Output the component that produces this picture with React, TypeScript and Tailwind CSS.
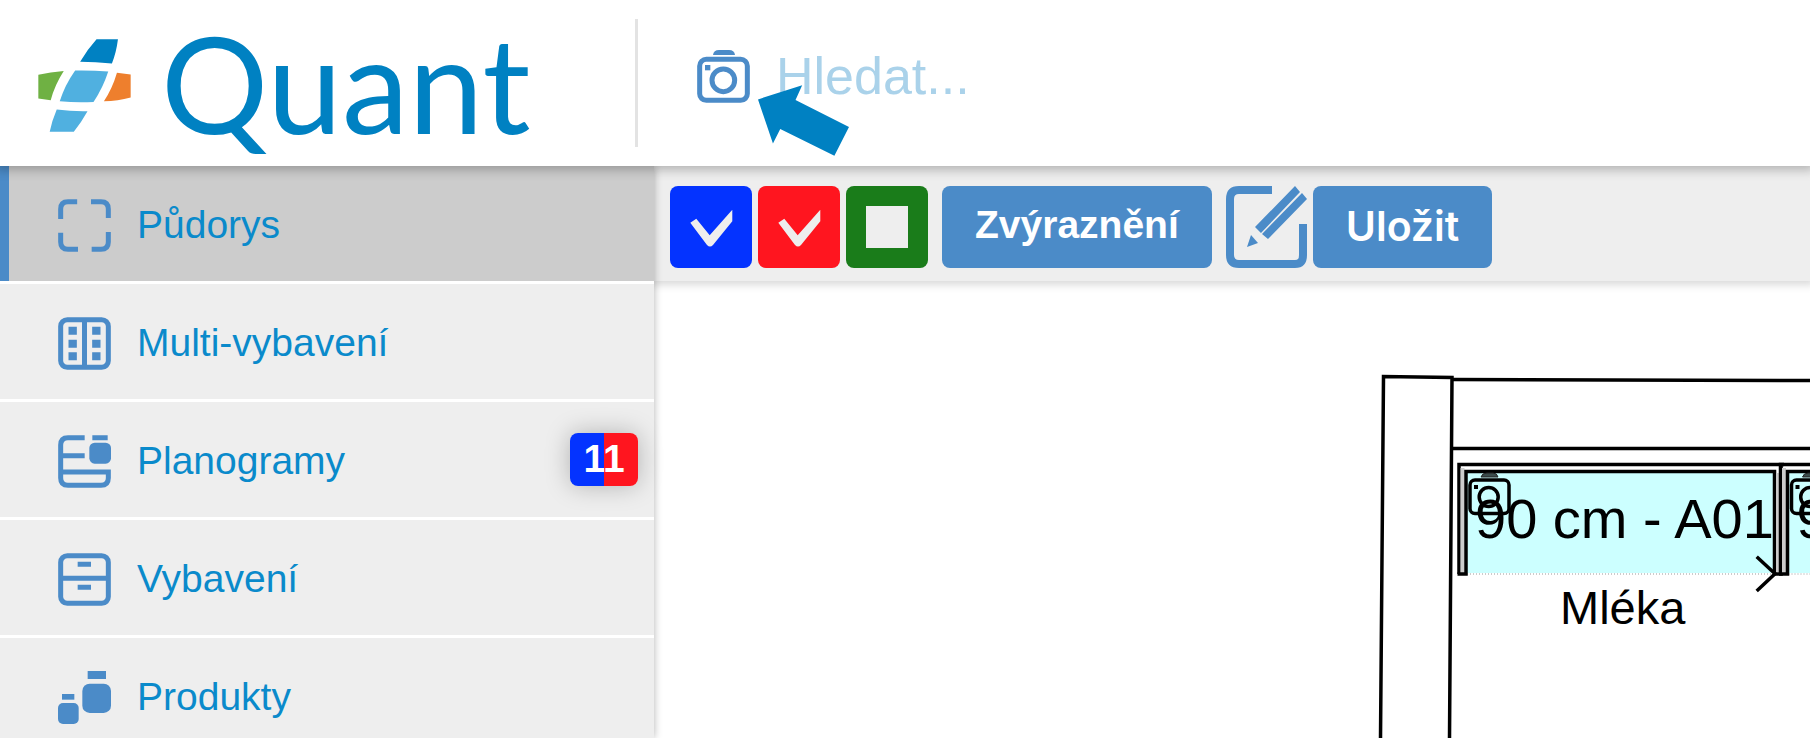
import type { ReactNode } from "react";

const menu: { label: string; icon: ReactNode; active?: boolean; badge?: string }[] = [
  { label: "Půdorys", icon: <FloorPlanIcon />, active: true },
  { label: "Multi-vybavení", icon: <MultiFixtureIcon /> },
  { label: "Planogramy", icon: <PlanogramIcon />, badge: "11" },
  { label: "Vybavení", icon: <FixtureIcon /> },
  { label: "Produkty", icon: <ProductsIcon /> },
];

function FloorPlanIcon() {
  return (
    <svg viewBox="0 0 159 159" className="size-[53px]" fill="none" stroke="#4b8bc8" strokeWidth="15">
      <path d="M57.500 8H30Q8 8 8 30V60M99 8h30q22 0 22 22v27M8 101v28q0 22 22 22h30M151 99v30q0 22-22 22h-28" />
    </svg>
  );
}

function MultiFixtureIcon() {
  return (
    <svg viewBox="0 0 159 159" className="size-[53px]" fill="none" stroke="#4b8bc8" strokeWidth="15">
      <rect x="8" y="8" width="143" height="143" rx="20" />
      <path d="M79.500 8v143" />
      <path d="M44 29v24M44 68v24M44 106v24M115 29v24M115 68v24M115 106v24" strokeWidth="25" />
    </svg>
  );
}

function PlanogramIcon() {
  return (
    <svg viewBox="0 0 159 159" className="size-[53px]" fill="none" stroke="#4b8bc8" strokeWidth="15">
      <path d="M80 8H30Q8 8 8 30v99q0 22 22 22h99q22 0 22-22v-18H8M8 62h72M103 8h46" />
      <rect x="94" y="23" width="65" height="63" rx="16" fill="#4b8bc8" stroke="none" />
    </svg>
  );
}

function FixtureIcon() {
  return (
    <svg viewBox="0 0 159 159" className="size-[53px]" fill="none" stroke="#4b8bc8" strokeWidth="15">
      <rect x="8" y="8" width="143" height="143" rx="20" />
      <path d="M8 76h143M59 34h40M59 103h40" />
    </svg>
  );
}

function ProductsIcon() {
  return (
    <svg viewBox="0 0 159 159" className="size-[53px]" fill="#4b8bc8">
      <rect x="89" y="0" width="55" height="24" />
      <rect x="73" y="38" width="86" height="88" rx="22" />
      <rect x="12" y="69" width="37" height="17" />
      <rect x="0" y="96" width="62" height="63" rx="15" />
    </svg>
  );
}

function CameraIcon() {
  return (
    <svg viewBox="0 0 159 159" className="size-[53px]" fill="none" stroke="#4b8bc8" strokeWidth="15">
      <path d="M48 15q2-15 18-15h30q16 0 18 15z" fill="#4b8bc8" stroke="none" />
      <rect x="8" y="28" width="143" height="123" rx="20" />
      <circle cx="79" cy="91" r="34" />
      <rect x="24" y="45" width="16" height="16" fill="#4b8bc8" stroke="none" />
    </svg>
  );
}

function LogoMark() {
  return (
    <svg viewBox="115 118 278 278" className="mt-1 size-[93px]">
      <path d="M290 119h64q-5 40-18 72-50-5-95-5 22-37 49-67z" fill="#0081c2" />
      <path d="M226 212q50-1 99 3-16 49-44 91-50 3-101-2 15-48 46-92z" fill="#50b0e0" />
      <path d="M171 329q46 6 92 5-18 33-41 61h-72q7-33 21-66z" fill="#50b0e0" />
      <path d="M116 225q36-8 76-11-27 42-39 87l-37-5z" fill="#6fb143" />
      <path d="M351 219l41 5v69q-38 11-80 11 25-37 39-85z" fill="#ee7f2d" />
    </svg>
  );
}

function CheckToggle({ label, checked, className }: { label: string; checked?: boolean; className: string }) {
  return (
    <label className={`relative block size-[82px] cursor-pointer rounded-lg ${className}`}>
      <input type="checkbox" defaultChecked={checked} aria-label={label} className="peer sr-only" />
      <svg viewBox="0 0 82 82" className="hidden peer-checked:block" fill="#eee">
        <path d="M20.300 36.700l6-4 13.400 16.600 22.600-25.600v11.600L43 59q-3 3-6 0z" />
      </svg>
      <svg viewBox="0 0 82 82" className="block peer-checked:hidden" fill="#eee">
        <rect x="20" y="20" width="42" height="42" />
      </svg>
    </label>
  );
}

function EditIcon() {
  return (
    <svg viewBox="0 0 81 82" className="h-[82px] w-[81px]">
      <path d="M46 4H13Q4 4 4 13v56q0 9 9 9h56q8 0 8-9V38" fill="none" stroke="#4b8bc8" strokeWidth="8" />
      <path d="M69 0l5 6-39 41-6-6zM76 7l5 6-39 40-6-5zM25 49l7 8-11 4z" fill="#4b8bc8" />
    </svg>
  );
}

function Shelf() {
  return (
    <g>
      <path d="M1459 574V464.500h325" fill="none" stroke="#000" strokeWidth="3.500" />
      <path d="M1462.500 573V468" stroke="#ccc" strokeWidth="4" />
      <rect x="1466" y="472" width="309" height="101" fill="#cff" />
      <path d="M1467 574h307" stroke="#999" strokeDasharray="1 2" />
      <path d="M1457.500 574h8.500V471.500h308.500V574h6.500V464.500" fill="none" stroke="#000" strokeWidth="3.500" />
      <path d="M1777.700 572V473" stroke="#ccc" strokeWidth="3" />
      <path d="M1481 477q1-4 6-4h6q4 0 5 4z" fill="#3c4c4c" stroke="#222" />
      <rect x="1470" y="480" width="39" height="33.500" rx="5" fill="none" stroke="#000" strokeWidth="3.500" />
      <circle cx="1488.700" cy="497" r="9.500" fill="none" stroke="#000" strokeWidth="3.500" />
      <rect x="1474" y="485" width="4" height="4" />
      <text x="1475" y="538" fontSize="56">
        90 cm - A01
      </text>
    </g>
  );
}

function FloorPlan() {
  return (
    <svg viewBox="1370 281 440 457" className="h-[457px] w-[440px] shrink-0">
      <g fill="none" stroke="#000" strokeWidth="3.500">
        <path d="M1380.500 738l3-361.500 68.500 1-2.500 360.500" />
        <path d="M1452 379.500l358 1M1452 448.500h358" />
      </g>
      <Shelf />
      <g transform="translate(321.500 0)">
        <Shelf />
      </g>
      <path d="M1756.700 556.700l18.300 17-18.300 17.300" fill="none" stroke="#000" strokeWidth="3.500" />
      <text x="1560" y="624" fontSize="47">
        Mléka
      </text>
    </svg>
  );
}

export default function App() {
  return (
    <div className="flex h-screen flex-col overflow-hidden bg-white font-['Liberation_Sans',Arial,sans-serif]">
      <header className="relative z-20 flex shrink-0 items-center bg-white py-[19px] shadow-[0_0_10px_4px_rgba(0,0,0,0.25)]">
        <a href="#" className="flex w-[635px] shrink-0 items-center gap-[30px] pl-[38px]">
          <LogoMark />
          <span className="font-[Lato] text-[134px] leading-[128px] text-[#0081c2]">Quant</span>
        </a>
        <div className="relative flex flex-1 items-center gap-[26px] self-stretch border-l-3 border-[#e3e3e3] pb-[14px] pl-[59px]">
          <button type="button" aria-label="Fotografie">
            <CameraIcon />
          </button>
          <input
            type="search"
            aria-label="Hledat"
            placeholder="Hledat..."
            className="min-w-0 flex-1 bg-transparent text-[52px] text-[#0081c2] outline-none placeholder:text-[#aad2ea]"
          />
          <svg viewBox="295 195 274 213" className="absolute left-[120px] top-[66px] h-[71px] w-[91px]" fill="#0081c2">
            <path d="M295 238l133-43-20 45 161 81-44 87-163-81-22 44z" />
          </svg>
        </div>
      </header>

      <div className="flex min-h-0 flex-1">
        <nav className="z-10 flex w-[654px] shrink-0 flex-col gap-[3px] bg-white shadow-[0_0_8px_rgba(0,0,0,0.3)]">
          {menu.map((item) => (
            <a
              key={item.label}
              href="#"
              className={`flex h-[115px] shrink-0 items-center gap-[26px] border-l-9 pl-[49px] pr-4 pt-[3px] text-[39px] text-[#0a8acb] ${
                item.active ? "border-[#4b8bc8] bg-[#ccc]" : "border-[#eee] bg-[#eee]"
              }`}
            >
              {item.icon}
              <span>{item.label}</span>
              {item.badge && (
                <span className="-mt-[3px] ml-auto flex h-[53px] w-[68px] items-center justify-center rounded-lg bg-linear-to-r from-[#0433ff] from-50% to-[#ff151f] to-50% font-bold text-white shadow-[0_0_24px_rgba(0,0,0,0.25)]">
                  {item.badge}
                </span>
              )}
            </a>
          ))}
        </nav>

        <main className="flex min-w-0 flex-1 flex-col">
          <div className="flex shrink-0 items-center bg-[#eee] px-4 pb-[13px] pt-5 shadow-[0_0_8px_4px_rgba(0,0,0,0.15)]">
            <div className="flex gap-[6px]">
              <CheckToggle label="Modrá" checked className="bg-[#0433ff]" />
              <CheckToggle label="Červená" checked className="bg-[#ff151f]" />
              <CheckToggle label="Zelená" className="bg-[#1a7c1a]" />
            </div>
            <button
              type="button"
              className="ml-[14px] h-[82px] rounded-lg bg-[#4b8bc8] px-[33px] pb-1 text-[39px] font-bold text-white"
            >
              Zvýraznění
            </button>
            <div className="ml-[14px] flex gap-[6px]">
              <button type="button" aria-label="Upravit">
                <EditIcon />
              </button>
              <button
                type="button"
                className="h-[82px] rounded-lg bg-[#4b8bc8] px-[33px] font-[Inter] text-[41px] font-semibold text-white"
              >
                Uložit
              </button>
            </div>
          </div>
          <div className="flex flex-1 justify-end overflow-hidden">
            <FloorPlan />
          </div>
        </main>
      </div>
    </div>
  );
}
